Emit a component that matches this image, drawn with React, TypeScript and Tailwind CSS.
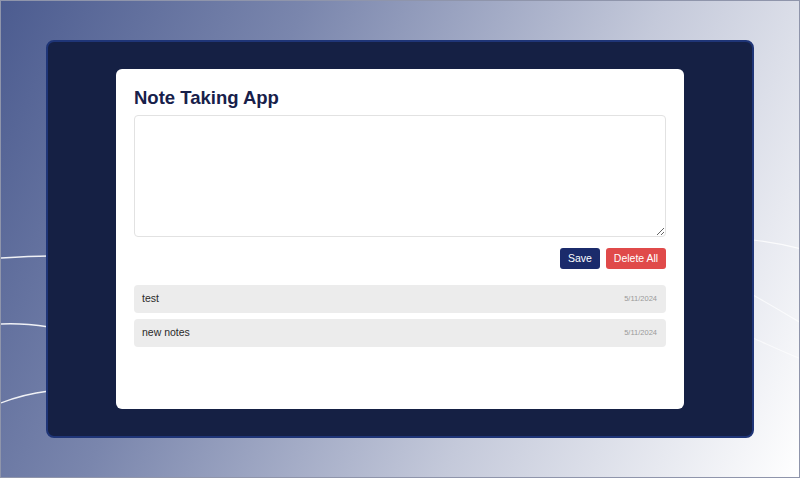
import React, { useState } from 'react';

type Note = { text: string; date: string };

const notes: Note[] = [
  { text: 'test', date: '5/11/2024' },
  { text: 'new notes', date: '5/11/2024' },
];

export default function App() {
  const [draft, setDraft] = useState('');

  return (
    <div
      className="relative w-full h-[478px] overflow-hidden border border-[#8f95ab] bg-[linear-gradient(115deg,#4c5c90_0%,#7a86ad_30%,#c4c9da_65%,#ffffff_100%)]"
      style={{ fontFamily: '"Liberation Sans", Arial, sans-serif' }}
    >
      {/* background strokes */}
      <svg className="absolute inset-0 pointer-events-none" width="800" height="478" viewBox="0 0 800 478" fill="none">
        <path d="M0 257 C 15 256, 35 255, 48 255" stroke="#ffffff" strokeOpacity="0.9" strokeWidth="1.3" />
        <path d="M0 323 C 18 322, 35 324, 48 326" stroke="#ffffff" strokeOpacity="0.9" strokeWidth="1.3" />
        <path d="M0 402 C 15 396, 32 392, 48 390" stroke="#ffffff" strokeOpacity="0.9" strokeWidth="1.3" />
        <path d="M752 239 C 770 241, 785 244, 800 248" stroke="#ffffff" strokeOpacity="0.8" strokeWidth="1.2" />
        <path d="M752 294 C 770 304, 785 313, 800 322" stroke="#ffffff" strokeOpacity="0.7" strokeWidth="1.2" />
        <path d="M752 337 C 770 345, 785 352, 800 358" stroke="#ffffff" strokeOpacity="0.6" strokeWidth="1.2" />
      </svg>

      <div className="relative h-full px-[45px] py-[39px] flex">
        <div className="flex-1 flex rounded-lg border-2 border-[#1f3577] bg-[#152044] px-[68px] py-[27px]">
          <div className="flex-1 flex flex-col rounded-md bg-white px-[18px] pt-[17px]">
            <h1 className="text-[18.5px] leading-[24px] font-bold text-[#17204a]">Note Taking App</h1>
            <textarea
              value={draft}
              onChange={(e) => setDraft(e.target.value)}
              className="mt-[5px] h-[122px] w-full rounded-[4px] border border-[#e2e2e2] p-2 text-[12px] outline-none"
            />
            <div className="mt-[11px] flex justify-end gap-[6px]">
              <button className="h-[21px] w-[40px] rounded-[3px] bg-[#1b2b6b] text-[10.5px] text-white">Save</button>
              <button className="h-[21px] w-[60px] rounded-[3px] bg-[#e04a4a] text-[10.5px] text-white">Delete All</button>
            </div>
            <div className="mt-[16px] flex flex-col gap-[6px]">
              {notes.map((n, i) => (
                <div key={i} className="relative h-[28px] rounded-[4px] bg-[#ececec] pl-[8px] flex items-center">
                  <span className="text-[10.5px] text-[#2a2a2a]">{n.text}</span>
                  <span className="absolute right-[9px] top-[9px] text-[7.5px] leading-[9px] text-[#9a9a9a]">{n.date}</span>
                </div>
              ))}
            </div>
          </div>
        </div>
      </div>
    </div>
  );
}
